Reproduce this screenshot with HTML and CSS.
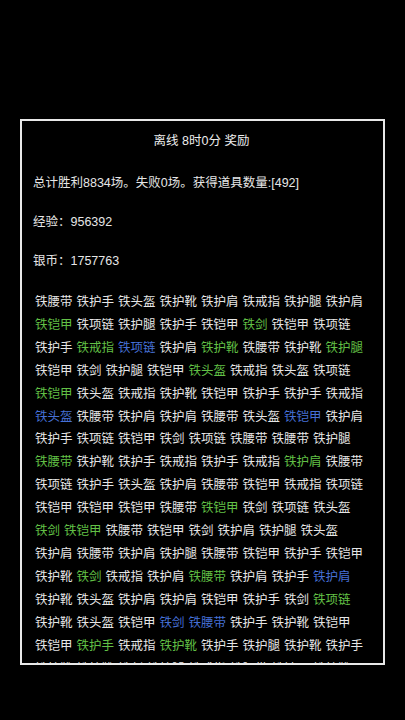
FILE: index.html
```html
<!DOCTYPE html>
<html lang="zh">
<head>
    <meta charset="UTF-8">
    <meta name="viewport" content="width=device-width, initial-scale=1.0">
    <title>离线奖励</title>
    <link rel="stylesheet" href="styles.css">
</head>
<body>
    <div class="reward-box">
        <div class="title">离线 8时0分 奖励</div>
        <div class="info">总计胜利8834场。失败0场。获得道具数量:[492]</div>
        <div class="info">经验：956392</div>
        <div class="info">银币：1757763</div>

        <div class="items">
            <span>铁腰带</span><span>铁护手</span><span>铁头盔</span><span>铁护靴</span><span>铁护肩</span><span>铁戒指</span><span>铁护腿</span><span>铁护肩</span>
            <span class="green">铁铠甲</span><span>铁项链</span><span>铁护腿</span><span>铁护手</span><span>铁铠甲</span><span class="green">铁剑</span><span>铁铠甲</span><span>铁项链</span>
            <span>铁护手</span><span class="green">铁戒指</span><span class="blue">铁项链</span><span>铁护肩</span><span class="green">铁护靴</span><span>铁腰带</span><span>铁护靴</span><span class="green">铁护腿</span>
            <span>铁铠甲</span><span>铁剑</span><span>铁护腿</span><span>铁铠甲</span><span class="green">铁头盔</span><span>铁戒指</span><span>铁头盔</span><span>铁项链</span>
            <span class="green">铁铠甲</span><span>铁头盔</span><span>铁戒指</span><span>铁护靴</span><span>铁铠甲</span><span>铁护手</span><span>铁护手</span><span>铁戒指</span>
            <span class="blue">铁头盔</span><span>铁腰带</span><span>铁护肩</span><span>铁护肩</span><span>铁腰带</span><span>铁头盔</span><span class="blue">铁铠甲</span><span>铁护肩</span>
            <span>铁护手</span><span>铁项链</span><span>铁铠甲</span><span>铁剑</span><span>铁项链</span><span>铁腰带</span><span>铁腰带</span><span>铁护腿</span>
            <span class="green">铁腰带</span><span>铁护靴</span><span>铁护手</span><span>铁戒指</span><span>铁护手</span><span>铁戒指</span><span class="green">铁护肩</span><span>铁腰带</span>
            <span>铁项链</span><span>铁护手</span><span>铁头盔</span><span>铁护肩</span><span>铁腰带</span><span>铁铠甲</span><span>铁戒指</span><span>铁项链</span>
            <span>铁铠甲</span><span>铁铠甲</span><span>铁铠甲</span><span>铁腰带</span><span class="green">铁铠甲</span><span>铁剑</span><span>铁项链</span><span>铁头盔</span>
            <span class="green">铁剑</span><span class="green">铁铠甲</span><span>铁腰带</span><span>铁铠甲</span><span>铁剑</span><span>铁护肩</span><span>铁护腿</span><span>铁头盔</span>
            <span>铁护肩</span><span>铁腰带</span><span>铁护肩</span><span>铁护腿</span><span>铁腰带</span><span>铁铠甲</span><span>铁护手</span><span>铁铠甲</span>
            <span>铁护靴</span><span class="green">铁剑</span><span>铁戒指</span><span>铁护肩</span><span class="green">铁腰带</span><span>铁护肩</span><span>铁护手</span><span class="blue">铁护肩</span>
            <span>铁护靴</span><span>铁头盔</span><span>铁护肩</span><span>铁护肩</span><span>铁铠甲</span><span>铁护手</span><span>铁剑</span><span class="green">铁项链</span>
            <span>铁护靴</span><span>铁头盔</span><span>铁铠甲</span><span class="blue">铁剑</span><span class="blue">铁腰带</span><span>铁护手</span><span>铁护靴</span><span>铁铠甲</span>
            <span>铁铠甲</span><span class="green">铁护手</span><span>铁戒指</span><span class="green">铁护靴</span><span>铁护手</span><span>铁护腿</span><span>铁护靴</span><span>铁护手</span>
            <span>铁护靴</span><span>铁护靴</span><span>铁剑</span><span>铁护腿</span><span>铁戒指</span><span>铁腰带</span><span>铁铠甲</span><span>铁护靴</span>
        </div>
    </div>
</body>
</html>
```

FILE: styles.css
```css
body {
    margin: 0;
    background-color: #000;
    color: #e6e6e6;
    font-family: "Liberation Sans", "Noto Sans CJK SC", sans-serif;
    font-size: 12.5px;
}

.reward-box {
    box-sizing: border-box;
    width: 365px;
    height: 546px;
    margin: 119px 0 0 20px;
    padding: 10px 13px 0 11px;
    border: 2px solid #e8e8e8;
    overflow: hidden;
}

.title {
    line-height: 20px;
    text-align: center;
    margin-bottom: 22px;
    color: #eee;
}

.info {
    line-height: 20px;
    margin-bottom: 19px;
}

.items {
    display: flex;
    flex-wrap: wrap;
    column-gap: 4px;
    width: 330px;
    margin-left: 2px;
    font-family: "Noto Sans CJK SC", sans-serif;
}

.items span {
    line-height: 22.9px;
}

.green {
    color: #62c046;
}

.blue {
    color: #4670d6;
}
```
